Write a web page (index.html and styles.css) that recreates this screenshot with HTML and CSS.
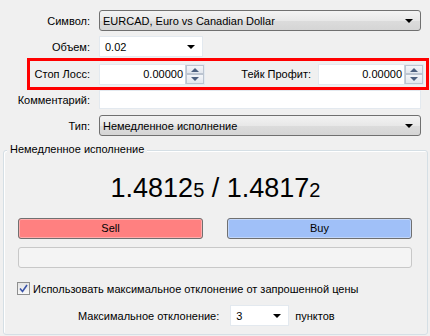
FILE: index.html
```html
<!DOCTYPE html>
<html lang="ru">
<head>
    <meta charset="utf-8">
    <title>Ордер</title>
    <link rel="stylesheet" href="styles.css">
</head>
<body>
    <div class="form">
        <div class="row r-symbol">
            <span class="lbl">Символ:</span>
            <div class="combo wide"><span>EURCAD, Euro vs Canadian Dollar</span><i class="arrow"></i></div>
        </div>
        <div class="row r-volume">
            <span class="lbl">Объем:</span>
            <div class="edit-combo"><span>0.02</span><i class="arrow"></i></div>
        </div>
        <div class="sltp">
            <span class="lbl lbl-sl">Стоп Лосс:</span>
            <div class="spin">
                <div class="spin-val">0.00000</div>
                <div class="spin-btns"><b class="up"></b><b class="down"></b></div>
            </div>
            <span class="lbl lbl-tp">Тейк Профит:</span>
            <div class="spin">
                <div class="spin-val">0.00000</div>
                <div class="spin-btns"><b class="up"></b><b class="down"></b></div>
            </div>
        </div>
        <div class="row r-comment">
            <span class="lbl">Комментарий:</span>
            <div class="edit wide"></div>
        </div>
        <div class="row r-type">
            <span class="lbl">Тип:</span>
            <div class="combo wide"><span>Немедленное исполнение</span><i class="arrow"></i></div>
        </div>
    </div>

    <div class="group">
        <span class="group-title">Немедленное исполнение</span>
        <div class="price">1.4812<small>5</small> / 1.4817<small>2</small></div>
        <div class="buttons">
            <div class="btn sell">Sell</div>
            <div class="btn buy">Buy</div>
        </div>
        <div class="panel"></div>
        <label class="check">
            <span class="box">
                <svg width="9" height="9" viewBox="0 0 9 9"><path d="M1 4.5 L3.5 7.5 L8 1" fill="none" stroke="#3a53a8" stroke-width="1.6"/></svg>
            </span>
            Использовать максимальное отклонение от запрошенной цены
        </label>
        <div class="deviation">
            <span>Максимальное отклонение:</span>
            <div class="edit-combo small"><span>3</span><i class="arrow"></i></div>
            <span>пунктов</span>
        </div>
    </div>
</body>
</html>
```
FILE: styles.css
```css
body {
    margin: 0;
    width: 430px;
    height: 336px;
    background: #f0f0f0;
    font-family: "Liberation Sans", Arial, sans-serif;
    font-size: 11px;
    color: #000;
    overflow: hidden;
}
.form {
    padding-top: 10px;
}
.row {
    display: flex;
    align-items: center;
}
.lbl {
    width: 99px;
    padding-right: 9px;
    text-align: right;
    box-sizing: border-box;
}
.wide {
    width: 322px;
}
.r-volume { margin-top: 5px; }
.r-comment { margin-top: 0; }
.r-type { margin-top: 6px; }

.combo {
    height: 21px;
    box-sizing: border-box;
    border: 1px solid #707070;
    border-radius: 3px;
    background: linear-gradient(#f3f3f3, #e8e8e8 50%, #dcdcdc 51%, #d5d5d5);
    display: flex;
    align-items: center;
    padding-left: 3px;
}
.combo span, .edit-combo span {
    flex: 1;
}
.arrow {
    width: 0;
    height: 0;
    border-left: 4px solid transparent;
    border-right: 4px solid transparent;
    border-top: 4px solid #000;
    margin-right: 7px;
}
.edit-combo {
    width: 104px;
    height: 21px;
    box-sizing: border-box;
    background: #fff;
    border: 1px solid #e3e9ef;
    display: flex;
    align-items: center;
    padding-left: 5px;
}
.edit-combo.small {
    width: 59px;
}
.edit {
    height: 19px;
    box-sizing: border-box;
    background: #fff;
    border: 1px solid #e3e9ef;
}

.sltp {
    display: flex;
    align-items: center;
    margin: 1px 1px 0 27px;
    height: 32px;
    box-sizing: border-box;
    border: 3px solid #ff0000;
}
.lbl-sl {
    width: 69px;
}
.lbl-tp {
    width: 113px;
    padding-right: 7px;
}
.spin {
    display: flex;
    height: 21px;
    background: #fff;
    border: 1px solid #e3e9ef;
    box-sizing: border-box;
}
.spin-val {
    width: 85px;
    text-align: right;
    padding-right: 2px;
    line-height: 19px;
    box-sizing: border-box;
}
.spin-btns {
    width: 18px;
    display: flex;
    flex-direction: column;
    border-left: 1px solid #c9d1dc;
}
.spin-btns b {
    flex: 1;
    background: linear-gradient(#f4f6f9, #e2e7ee);
    border: 1px solid #bcc5d1;
    position: relative;
}
.spin-btns b::after {
    content: "";
    position: absolute;
    left: 4px;
    top: 2px;
    border-left: 4px solid transparent;
    border-right: 4px solid transparent;
}
.spin-btns .up::after {
    border-bottom: 4px solid #4c607f;
}
.spin-btns .down::after {
    border-top: 4px solid #4c607f;
}

.group {
    position: relative;
    margin: 14px 2px 0 3px;
    height: 185px;
    box-sizing: border-box;
    border: 1px solid #d5dfe5;
    border-radius: 3px;
    box-shadow: inset 1px 1px 0 #fff;
    padding: 0 14px;
}
.group-title {
    position: absolute;
    top: -8px;
    left: 3px;
    padding: 0 3px;
    background: #f0f0f0;
}
.price {
    text-align: center;
    font-size: 27px;
    margin-top: 22px;
    height: 45px;
    line-height: 30px;
}
.price small {
    font-size: 20px;
}
.buttons {
    display: flex;
    justify-content: space-between;
    margin-right: 1px;
}
.btn {
    width: 185px;
    height: 21px;
    box-sizing: border-box;
    border: 1px solid #707070;
    border-radius: 3px;
    text-align: center;
    line-height: 19px;
    box-shadow: inset 0 0 0 1px rgba(255,255,255,0.35);
}
.sell {
    background: #ff8080;
}
.buy {
    background: #a0c0f8;
}
.panel {
    margin-top: 8px;
    margin-right: 1px;
    height: 21px;
    box-sizing: border-box;
    border: 1px solid #c8c8c8;
    border-radius: 3px;
    background: #f4f4f4;
}
.check {
    display: flex;
    align-items: center;
    margin-top: 14px;
    margin-left: -1px;
}
.box {
    width: 13px;
    height: 13px;
    box-sizing: border-box;
    border: 1px solid #8e8f8f;
    background: linear-gradient(#e4e4e4, #f8f8f8);
    display: flex;
    align-items: center;
    justify-content: center;
    margin-right: 3px;
}
.deviation {
    display: flex;
    align-items: center;
    gap: 6px;
    margin-top: 10px;
    padding-left: 60px;
}
.deviation .edit-combo {
    margin-left: 5px;
}
```
